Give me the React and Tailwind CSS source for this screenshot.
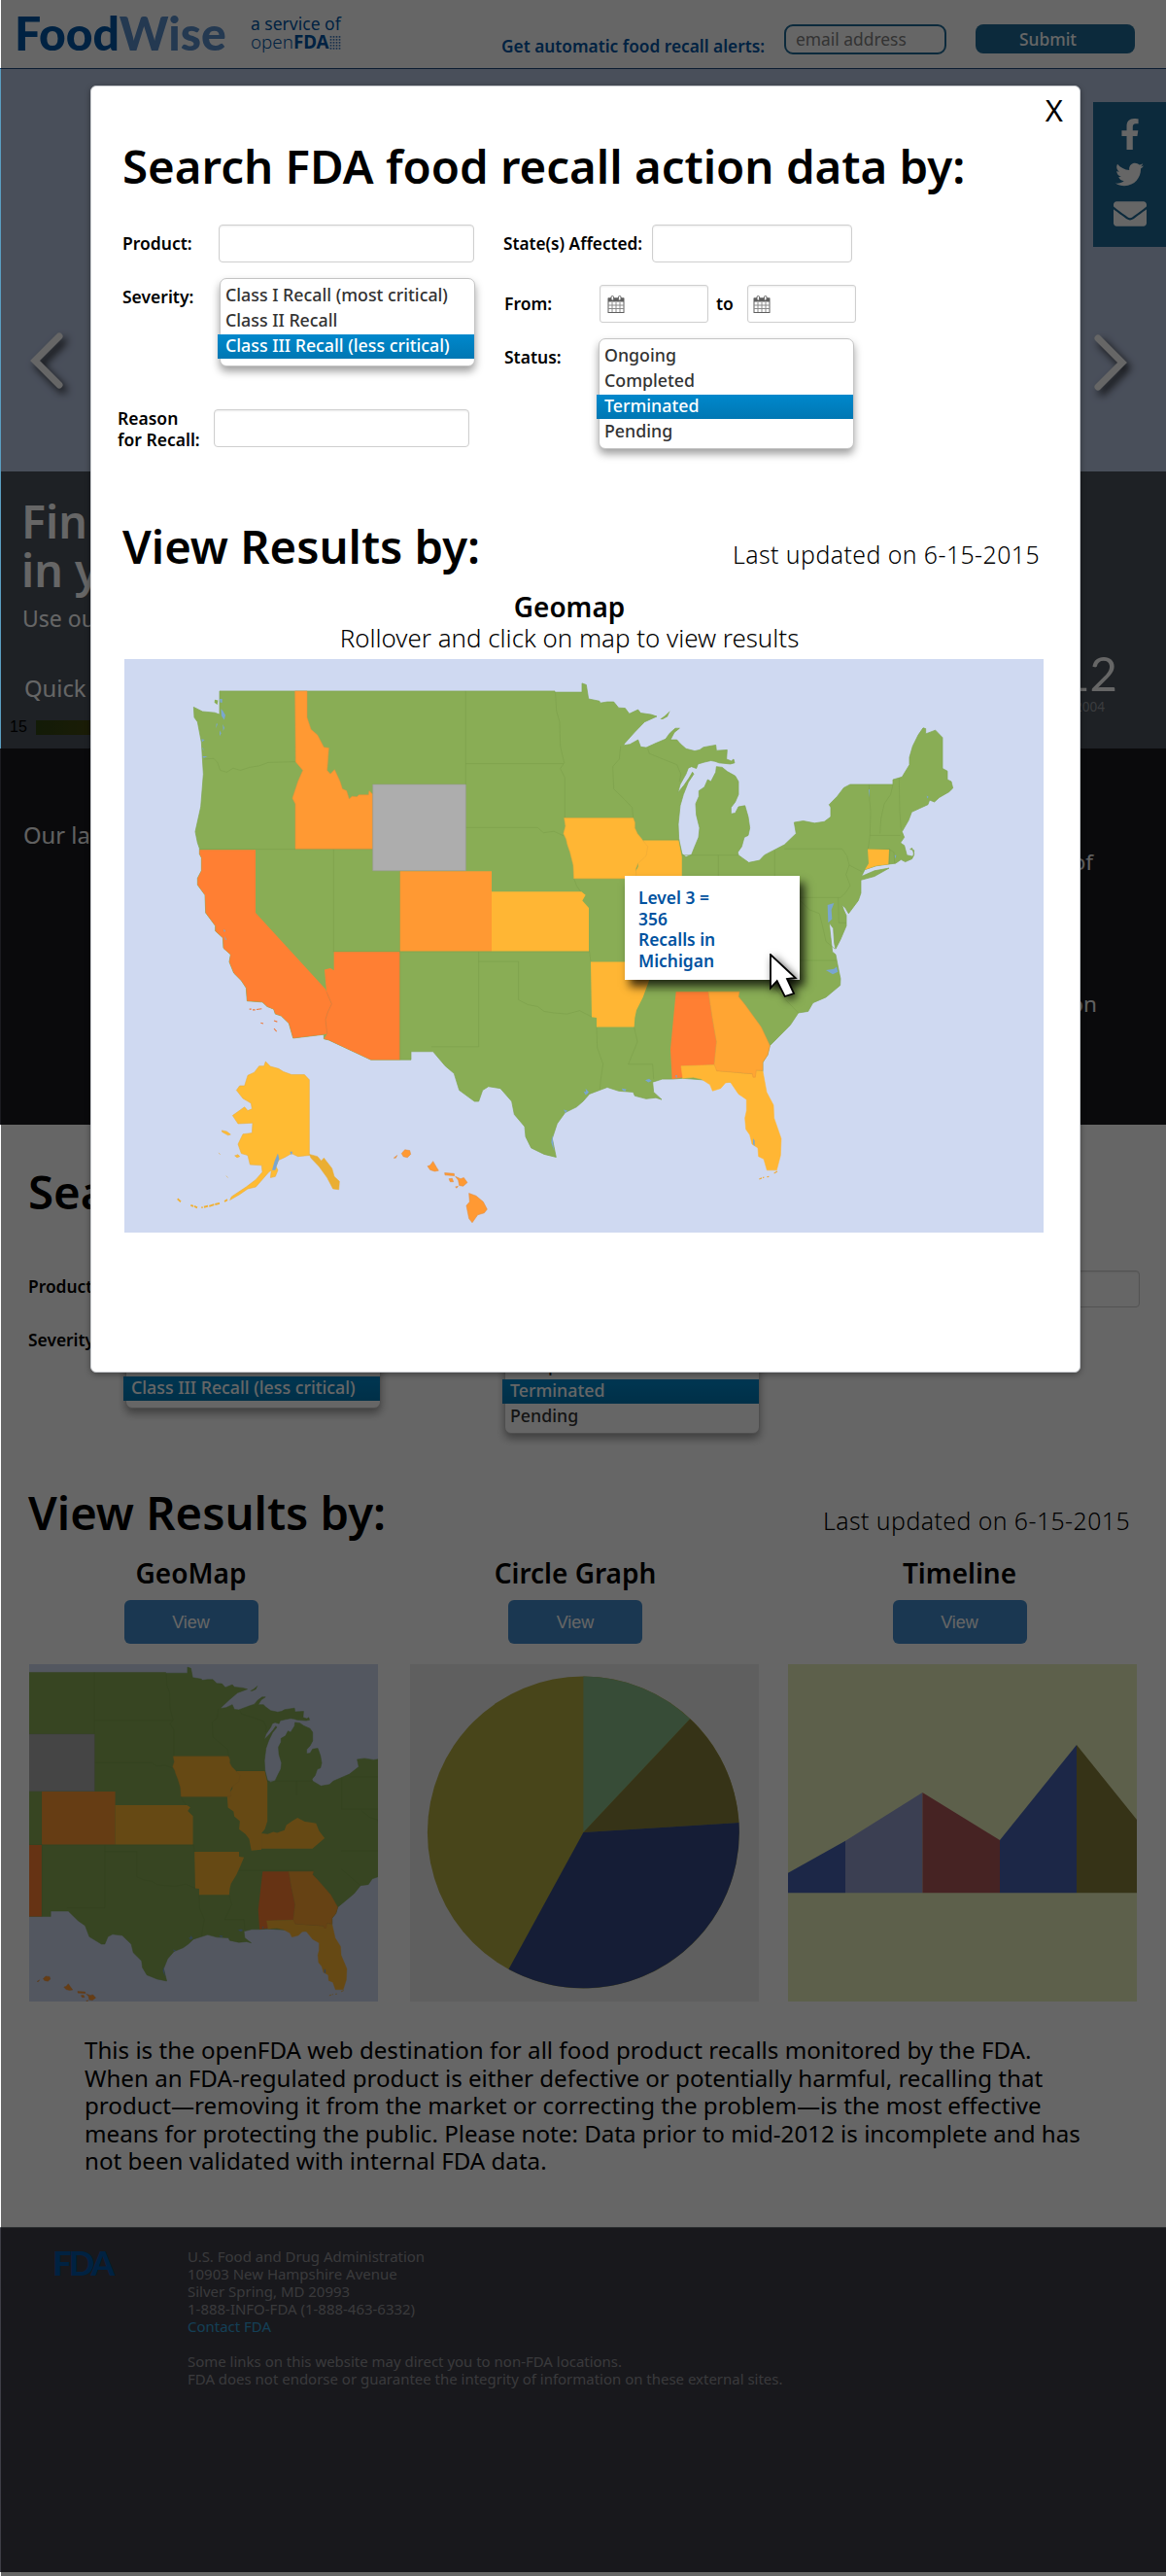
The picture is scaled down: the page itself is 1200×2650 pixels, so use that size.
import React from "react";
import { FaFacebookF, FaTwitter, FaEnvelope } from "react-icons/fa";

const WEST_COAST =
  "545,1040 532,1000 508,980 490,975 485,962 465,955 450,943 403,940 400,905 385,885 362,865 348,835 352,815 330,798 328,770 305,752 305,738 275,703 273,655 250,628 250,610 262,590 262,555 256,545 256,534";

const US_OUTLINE =
  "318,107 1353,107 1353,110 1437,110 1437,86 1450,90 1457,128 1491,134 1493,139 1515,136 1535,136 1550,152 1570,153 1583,168 1610,157 1618,166 1650,170 1668,175 1630,190 1600,217 1568,248 1565,253 1585,250 1610,238 1618,257 1635,259 1665,247 1695,236 1708,220 1725,207 1738,207 1722,218 1710,238 1730,238 1740,248 1758,262 1785,268 1800,265 1812,258 1850,252 1852,267 1885,265 1883,290 1898,295 1905,290 1908,300 1895,303 1860,300 1848,296 1835,294 1815,298 1795,303 1790,315 1775,310 1765,314 1758,330 1740,358 1733,380 1752,360 1768,340 1778,325 1782,330 1765,352 1750,385 1740,415 1734,465 1736,505 1746,545 1758,553 1775,547 1785,525 1797,500 1800,475 1790,440 1788,410 1798,390 1798,375 1815,365 1825,345 1835,350 1850,325 1852,310 1870,312 1885,323 1910,335 1920,350 1920,385 1910,405 1897,420 1897,437 1910,435 1920,418 1940,415 1950,445 1955,475 1950,495 1938,500 1930,525 1918,540 1920,548 1952,568 1985,562 2000,548 2062,520 2098,490 2092,460 2120,456 2155,462 2185,458 2205,445 2205,420 2200,412 2225,390 2245,367 2265,358 2397,358 2397,345 2425,338 2448,305 2448,285 2458,255 2475,225 2490,206 2498,208 2498,222 2528,212 2550,232 2550,315 2565,322 2565,345 2577,350 2582,368 2570,378 2540,393 2525,405 2510,400 2505,412 2480,422 2455,432 2445,455 2425,485 2432,500 2420,515 2432,522 2440,548 2460,552 2462,535 2450,532 2456,529 2462,545 2456,558 2435,566 2422,560 2405,570 2385,572 2345,577 2310,587 2300,605 2340,590 2385,583 2340,605 2298,615 2298,650 2290,670 2260,705 2250,690 2240,682 2245,695 2253,710 2253,738 2235,775 2220,800 2216,785 2213,745 2200,730 2205,770 2210,808 2220,815 2230,860 2235,880 2234,898 2190,930 2150,945 2135,968 2105,972 2080,1005 2040,1040 2017,1060 2010,1085 1995,1105 1995,1130 1900,1158 1748,1148 1715,1150 1685,1150 1655,1158 1658,1185 1683,1205 1665,1200 1635,1203 1600,1195 1595,1185 1550,1182 1515,1172 1460,1190 1440,1210 1420,1225 1385,1240 1360,1270 1345,1310 1357,1360 1320,1352 1280,1335 1263,1305 1260,1278 1228,1245 1220,1210 1185,1175 1148,1170 1130,1180 1118,1210 1105,1210 1058,1180 1042,1135 1015,1115 977,1076 909,1076 909,1098 785,1098 655,1045 640,1042 640,1030 " +
  WEST_COAST +
  " 256,530 250,515 243,485 260,418 268,330 262,245 250,190 240,178 238,150 265,162 303,165 318,170";

function UsMap({ viewBox, className }) {
  return (
    <svg viewBox={viewBox} preserveAspectRatio="none" className={className}>
      <rect width="946" height="590" fill="#cfd9f1" />
      <g transform="translate(-8,-8) scale(0.33333,0.38268)" strokeWidth="2" strokeLinejoin="round">
        <polygon points={US_OUTLINE} fill="#89ad55" stroke="#80a650" />
        <path
          fill="none"
          stroke="#7a9d49"
          strokeOpacity="0.75"
          d="M270,290 L300,288 312,300 320,320 340,325 360,314 382,320 410,312 440,308 468,299 553,297 M256,532 H791 M670,532 V808 M671,807 H1460 M875,591 V1098 M1078,107 V358 M1078,302 H1380 M1078,474 H1300 L1318,488 1350,484 1380,496 M1355,110 L1358,160 1368,190 1370,255 1382,300 1370,315 1384,340 V448 M1412,611 L1420,630 1440,655 M1118,807 V1063 H972 M1118,834 H1241 V937 L1270,950 1300,955 1320,968 1350,972 1390,975 1430,966 1467,983 M1460,806 L1464,835 M1482,1010 L1484,1065 1502,1110 1495,1150 1492,1178 M1556,255 L1552,290 1532,310 1535,370 1570,400 1592,420 1595,448 M1640,262 L1645,275 1730,305 1742,330 1738,350 M1622,507 H1738 M1598,1010 L1608,1050 1580,1110 H1655 L1658,1150 M1638,912 H1922 M1746,548 H1920 M1858,548 V605 M2032,535 V660 M2062,531 H2240 L2255,550 2262,575 2252,600 2265,630 2250,650 2235,662 H2030 M2262,575 L2300,592 M2323,358 L2325,400 2328,430 2326,495 2320,532 M2326,495 H2420 M2397,358 L2390,385 2370,410 2360,450 2357,490 M2416,340 L2418,430 2422,480 M2319,532 H2388 L2385,573 M2386,533 L2400,540 2402,570 M2228,662 L2230,730 H2253 M2110,670 L2140,695 2170,705 2180,740 2190,780 2218,800 M2030,831 H2222 M2030,905 L2105,972"
        />
        <g strokeWidth="1.5">
          <polygon points="551,107 588,107 588,178 600,210 620,225 640,258 655,260 650,320 660,330 673,318 690,350 697,370 710,375 718,397 727,390 742,391 748,386 778,386 780,375 791,385 791,531 552,531 552,410 543,395 560,350 575,320 553,297" fill="#ff9933" stroke="#e89038" />
          <polygon points="791,358 1078,358 1078,590 791,590" fill="#adadad" stroke="#989898" />
          <polygon points="875,591 1158,591 1158,806 875,806" fill="#ff9933" />
          <polygon points="1158,646 1435,646 1448,655 1438,670 1458,690 1458,806 1158,806" fill="#ffb634" />
          <polygon points={"429,534 429,703 645,908 655,930 664,948 652,970 645,990 650,1028 640,1030 " + WEST_COAST} fill="#ff7f33" />
          <polygon points="671,808 874,808 874,1098 785,1098 655,1045 640,1042 650,1028 645,990 652,970 664,948 648,915 642,856 660,852 671,858" fill="#ff7f33" />
          <path d="M648,915 L664,948 652,970 645,990 650,1028" fill="none" stroke="#d9763a" />
          <polygon points="1464,835 1636,835 1636,855 1655,858 1640,895 1625,930 1605,965 1600,985 1598,1010 1482,1010 1482,985 1467,983" fill="#ffb634" />
          <polygon points="1727,915 1827,915 1840,990 1852,1050 1845,1112 1743,1115 1752,1145 1715,1150 1710,1070" fill="#ff7f33" />
          <polygon points="1743,1115 1850,1112 1853,1128 1965,1137 1975,1127 1995,1128 2007,1185 2028,1220 2030,1255 2052,1310 2050,1355 2038,1395 2008,1395 1998,1365 1982,1358 1980,1335 1962,1325 1955,1300 1943,1285 1940,1255 1945,1235 1945,1205 1920,1190 1895,1158 1880,1160 1865,1175 1840,1182 1832,1165 1805,1150 1780,1145 1748,1148" fill="#ffb634" stroke="#ffb634" />
          <polygon points="1827,915 1923,915 1920,928 1940,950 1990,1010 2017,1060 2010,1085 1995,1105 1995,1127 1975,1126 1972,1145 1965,1145 1963,1136 1853,1128 1845,1110 1852,1050 1840,990" fill="#ffa533" stroke="#e8973a" />
          <polygon points="2319,532 2385,533 2383,573 2345,577 2310,587 2322,570" fill="#ffb634" />
          <path d="M1984,1419 l8,-3 M1995,1415 l4,-1 M2008,1413 l6,-1 M2030,1403 l10,-5" stroke="#f0aa35" strokeWidth="3" />
        </g>
        <g fill="#ffbb33" stroke="#e9ac38" strokeWidth="1.5">
          <polygon points="460,1103 475,1116 500,1122 515,1130 540,1138 580,1138 595,1152 595,1355 560,1358 540,1350 520,1360 500,1368 492,1385 498,1395 490,1412 475,1415 478,1395 470,1400 440,1430 430,1440 405,1445 380,1460 350,1475 355,1466 400,1440 430,1420 450,1400 448,1382 412,1380 405,1355 385,1350 375,1325 390,1298 418,1295 420,1268 375,1270 358,1248 395,1225 405,1235 418,1230 415,1215 390,1202 370,1180 380,1168 395,1168 405,1140 425,1132 440,1115 455,1115" />
          <polygon points="595,1352 620,1358 632,1370 640,1362 665,1390 672,1412 688,1425 686,1447 668,1445 650,1415 625,1385 600,1362" fill="#eaae33" />
          <path d="M325,1288 l15,3 12,8 -8,2 -18,-9z M365,1356 l10,-3 5,5 -8,3z M315,1348 l5,5 M338,1410 l6,5" />
        </g>
        <path d="M188,1472 l10,8 M229,1489 l8,3 M240,1492 l9,4 M262,1495 l4,0 M270,1494 l12,-3 M286,1492 l15,-5 M304,1487 l14,-3 M333,1479 l9,-5" stroke="#f0b033" strokeWidth="5" />
        <g fill="#ff9933" stroke="#e08c40" strokeWidth="1.5">
          <polygon points="880,1350 890,1340 905,1342 908,1352 898,1361 885,1358" />
          <polygon points="856,1362 866,1355 862,1362" />
          <polygon points="960,1384 968,1382 977,1371 987,1386 994,1396 982,1398 968,1394" />
          <polygon points="1013,1402 1042,1404 1043,1410 1014,1408" />
          <polygon points="1026,1418 1036,1417 1040,1426 1030,1426" />
          <polygon points="1046,1412 1062,1418 1072,1415 1083,1428 1070,1438 1058,1436 1055,1422" />
          <polygon points="1046,1440 1054,1438 1050,1443" />
          <polygon points="1088,1457 1110,1464 1132,1480 1144,1500 1135,1510 1115,1515 1098,1536 1088,1525 1080,1490 1090,1480" />
        </g>
        <path d="M410,962 l6,0 M420,964 l8,0 M432,963 l16,-2 M445,999 l8,2 M486,993 l10,3 M486,1014 l8,8" stroke="#ee7a3a" strokeWidth="3" />
        <g fill="#7aa6cf">
          <path d="M318,128 l8,0 0,10 -6,0z M322,155 l6,5 8,12 -4,12 -8,-10z M308,195 l4,0 -5,12z M328,196 l5,10 -4,8z M318,212 l5,8 -5,8z M262,236 l10,2 -8,6z M265,258 l5,8 -4,-2z M265,282 l16,0 -12,5z" />
          <path d="M303,130 l10,2 -2,12 -9,-6z" fill="#89ad55" />
          <path d="M498,1350 L502,1365 495,1382 490,1395 480,1395 488,1370z M535,1345 l8,0 -3,10z M1345,1300 l-3,20 8,22 -2,-20z M1448,1175 l10,10 -8,8z M1380,1232 l12,3 -6,6z M330,748 l6,2 -3,6z M334,765 l6,12 -5,-3z" />
          <path d="M1632,1153 l12,-4 8,6 -10,4z M1560,1175 l14,2 -4,6 -8,-3z M1442,1183 l10,2 -4,8z M2195,682 l20,-5 -8,18 2,25 -12,10z M2190,857 l25,-3 8,-6 4,14 -16,6z M2402,548 l5,0 -2,10z M2501,388 l6,3 -4,5z M1725,1140 l6,0 -2,8z M1965,1310 l5,5 0,15 -5,-5z M2322,372 l3,0 0,22z" />
        </g>
        <path d="M1678,182 l14,-8 17,-14 -8,16 -15,7z" fill="#89ad55" />
      </g>
      <g transform="translate(229.8,2.1) scale(.4784,.5035)">
        <polygon points="636,366 712,366 719,400 719,520 712,545 703,558 703,608 676,611 670,575 660,560 643,545 645,520 630,505 628,490 613,478 611,445 625,420 625,408 640,390" fill="#ffb634" />
        <polygon points="703,558 720,560 735,553 745,556 765,548 770,532 785,520 800,510 820,522 835,524 850,527 858,550 873,573 840,605 703,605" fill="#ffb634" />
      </g>
      <g transform="translate(-8,-8) scale(0.33333,0.38268)">
        <polygon points="1382,448 1595,448 1600,460 1600,475 1608,490 1622,505 1640,525 1635,550 1610,570 1603,585 1605,611 1412,611 1410,575 1400,540 1392,520 1388,505 1380,490 1386,470" fill="#ffb634" stroke="#eba938" strokeWidth="1.5" />
      </g>
    </svg>
  );
}

function PieChart() {
  return (
    <svg viewBox="0 0 359 347" className="h-[347px] w-[359px] bg-[#ededed]">
      <circle cx="178.4" cy="173" r="160.5" fill="#b4ac43" />
      <path d="M178.4,173 V12.5 A160.5,160.5 0 0 1 288.2,56.3 Z" fill="#8abe8a" />
      <path d="M178.4,173 L288.2,56.3 A160.5,160.5 0 0 1 338.5,163 Z" fill="#87803a" />
      <path d="M178.4,173 L338.5,163 A160.5,160.5 0 0 1 101.5,313.8 Z" fill="#364a88" />
    </svg>
  );
}

function Timeline() {
  return (
    <svg viewBox="0 0 359 347" className="h-[347px] w-[359px] bg-[#e9f0bc]">
      <polygon points="0,214.7 59,181.7 59,235.3 0,235.3" fill="#4662b2" />
      <polygon points="59,181.7 138.4,132 138.4,235.3 59,235.3" fill="#949ecd" />
      <polygon points="138.4,132 218,181 218,235.3 138.4,235.3" fill="#af5858" />
      <polygon points="218,181 297,83 297,235.3 218,235.3" fill="#4662b2" />
      <polygon points="297,83 359,160 359,235.3 297,235.3" fill="#87803a" />
    </svg>
  );
}

function Field({ className }) {
  return (
    <div className={"shrink-0 rounded border border-[#cfcfcf] bg-white shadow-[inset_0_1px_2px_rgba(0,0,0,0.08)] " + className} />
  );
}

function CalendarIcon({ className }) {
  return (
    <svg viewBox="0 0 18 18" className={"h-[18px] w-[18px] " + className}>
      <rect x="1" y="3" width="16" height="14.5" fill="#fff" stroke="#5f5f5f" />
      <rect x="1" y="2.5" width="16" height="4" fill="#5f5f5f" />
      <rect x="4" y="0.5" width="2.6" height="4.5" rx="1.2" fill="#fff" stroke="#5f5f5f" />
      <rect x="11.4" y="0.5" width="2.6" height="4.5" rx="1.2" fill="#fff" stroke="#5f5f5f" />
      <path d="M5 7V17 M9 7V17 M13 7V17 M1 10H17 M1 13.5H17" stroke="#8a8a8a" fill="none" />
    </svg>
  );
}

function DateField({ iconClass }) {
  return (
    <div className="flex h-[39px] w-[112px] items-center rounded-[3px] border border-[#cfcfcf] bg-white shadow-[inset_0_1px_2px_rgba(0,0,0,0.08)]">
      <CalendarIcon className={iconClass} />
    </div>
  );
}

function Dropdown({ before, selected, after = [], className }) {
  return (
    <ul className={"w-[263px] shrink-0 rounded-[7px] border border-[#c4c4c4] bg-white pt-[3px] text-[17.8px] font-medium text-[#333] shadow-[0_5px_9px_rgba(0,0,0,0.38)] " + className}>
      {before.map((t) => (
        <li key={t} className="h-[26px] pl-[5px] leading-[26px]">{t}</li>
      ))}
      <li className="-ml-[3px] mt-[2px] h-[25px] bg-linear-to-b from-[#0088cc] to-[#0077b3] pl-[8px] leading-[23px] text-white">{selected}</li>
      {after.map((t) => (
        <li key={t} className="h-[25px] pl-[5px] leading-[25px]">{t}</li>
      ))}
    </ul>
  );
}

const SEVERITY = ["Class I Recall (most critical)", "Class II Recall"];

function SearchModal() {
  return (
    <div className="absolute left-[93px] top-[88px] flex h-[1324px] w-[1019px] flex-col rounded-md border border-[#c9ccd0] bg-white text-black shadow-[0_2px_6px_rgba(0,0,0,0.35)]">
      <div className="flex justify-end pr-[17px] pt-[4px]">
        <button className="text-[31px] font-normal leading-[40px]">X</button>
      </div>
      <h2 className="mt-[10px] whitespace-nowrap pl-[32px] text-[47.4px] font-semibold leading-[56px]">Search FDA food recall action data by:</h2>

      <div className="ml-[32px] flex h-[263px] pt-[32px] text-[17.5px] font-semibold">
        <div className="w-[393px]">
          <div className="flex items-center">
            <span className="w-[99px]">Product:</span>
            <Field className="h-[39px] w-[263px]" />
          </div>
          <div className="mt-[16px] flex">
            <span className="mt-[7px] w-[100px] leading-[24px]">Severity:</span>
            <Dropdown before={SEVERITY} selected="Class III Recall (less critical)" className="h-[91px]" />
          </div>
          <div className="-ml-[5px] mt-[41px] flex">
            <span className="mt-px w-[99px] leading-[22px]">Reason<br />for Recall:</span>
            <Field className="mt-[3px] h-[39px] w-[263px]" />
          </div>
        </div>
        <div className="w-[420px]">
          <div className="flex items-center">
            <span className="-ml-px w-[153px] whitespace-nowrap text-[17.2px]">State(s) Affected:</span>
            <Field className="h-[39px] w-[206px]" />
          </div>
          <div className="mt-[23px] flex items-center">
            <span className="w-[98px]">From:</span>
            <DateField iconClass="ml-[7px]" />
            <span className="ml-[8px] w-[32px]">to</span>
            <DateField iconClass="ml-[5px]" />
          </div>
          <div className="mt-[16px] flex">
            <span className="mt-[7px] w-[97px] leading-[24px]">Status:</span>
            <Dropdown before={["Ongoing", "Completed"]} selected="Terminated" after={["Pending"]} className="h-[114px]" />
          </div>
        </div>
      </div>

      <div className="mt-[72px] flex items-baseline justify-between pl-[32px] pr-[41px]">
        <h2 className="text-[47.2px] font-semibold leading-[56px]">View Results by:</h2>
        <span className="text-[24.8px] font-light leading-[30px] tracking-[0.45px]">Last updated on 6-15-2015</span>
      </div>
      <div className="mt-[18px] pr-[33px] text-center leading-[32px]">
        <h3 className="text-[27.9px] font-semibold">Geomap</h3>
        <p className="text-[25.9px] font-light">Rollover and click on map to view results</p>
      </div>
      <div className="relative ml-[34px] mt-[6px] h-[590px] w-[946px]">
        <UsMap viewBox="0 0 946 590" className="h-[590px] w-[946px]" />
        <div className="absolute left-[515px] top-[223px] h-[107px] w-[180px] bg-white pl-[14px] pt-[12px] text-[17.4px] font-semibold leading-[21.7px] text-[#00529f] shadow-[5px_7px_9px_rgba(0,0,0,0.75)]">
          Level 3 =<br />356<br />Recalls in<br />Michigan
        </div>
        <svg viewBox="-1 -1 30 48" className="absolute left-[664px] top-[303px] h-[48px] w-[30px] drop-shadow-[3px_3px_4px_rgba(0,0,0,0.7)]">
          <polygon points="0,0 0,34.4 6.7,27 14.7,43 24,40 17,25 25.7,24" fill="#fff" stroke="#000" strokeWidth="1.8" />
        </svg>
      </div>
    </div>
  );
}

function ResultCard({ title, headClass, children }) {
  return (
    <div className="w-[359px]">
      <div className={"flex flex-col items-center " + headClass}>
        <h3 className="whitespace-nowrap text-[28px] font-semibold leading-[32px]">{title}</h3>
        <button className="mt-[12px] h-[45px] w-[138px] rounded-md bg-[#428bca] pt-[2px] font-['Liberation_Sans',sans-serif] text-[18px] text-white">View</button>
      </div>
      <div className="mt-[21px]">{children}</div>
    </div>
  );
}

function Chevron({ flip, className }) {
  return (
    <svg viewBox="0 0 34 58" className={"h-[58px] w-[34px] drop-shadow-[4px_5px_4px_rgba(0,0,0,0.8)] " + className}>
      <path d={flip ? "M4,4 L29,29 L4,54" : "M30,4 L5,29 L30,54"} fill="none" stroke="#fff" strokeWidth="7" strokeLinecap="round" />
    </svg>
  );
}

export default function App() {
  return (
    <div className="relative h-[2650px] w-[1200px] overflow-hidden bg-white font-['Noto_Sans','Open_Sans',sans-serif] text-black">
      <header className="flex h-[71px] items-start border-b border-[#1e4a7a]">
        <div className="w-[258px] pl-[15px] pt-[10px] font-['Lato',sans-serif] text-[48.1px] font-black leading-[48px] text-[#0055a5]">
          Food<span className="text-[#5a8ecb]">Wise</span>
        </div>
        <div className="w-[258px] pt-[15px] text-[17.5px] leading-[19.4px] text-[#0055a5]">
          <div>a service of</div>
          <div className="flex items-center">
            <span className="text-[18.8px] font-light">open<b className="font-bold">FDA</b></span>
            <svg viewBox="0 0 12 14" className="h-[14px] w-[12px]">
              <path d="M1.5 0V14 M4.5 0V14 M7.5 0V14 M10.5 0V14" stroke="#3f7cc0" strokeWidth="1.6" strokeDasharray="1.8 1.2" />
            </svg>
          </div>
        </div>
        <span className="mt-[36px] w-[291px] whitespace-nowrap text-[17.3px] font-semibold leading-[24px] text-[#0055a5]">Get automatic food recall alerts:</span>
        <div className="mt-[25px] h-[31px] w-[167px] rounded-[9px] border-2 border-[#1e6996] pl-[10px] text-[17.4px] leading-[26px] text-[#808080]">email address</div>
        <button className="ml-[30px] mt-[25px] h-[30px] w-[164px] rounded-lg bg-[#1e6996] pr-[15px] text-[17.4px] font-medium leading-[30px] text-white">Submit</button>
      </header>

      <section className="relative flex h-[414px] justify-between border-l border-[#5a9ec0] bg-[#b7c5e2] pl-[30px] pr-[40px]">
        <Chevron className="mt-[271px]" />
        <Chevron flip className="mt-[273px]" />
        <div className="absolute right-0 top-[34px] flex h-[149px] w-[75px] flex-col items-center bg-[#1e6996] text-white">
          <FaFacebookF className="mt-[17px] h-[32px] w-[20px]" />
          <FaTwitter className="mt-[11px] h-[29px] w-[29px]" />
          <FaEnvelope className="mt-[9px] h-[34px] w-[34px]" />
        </div>
      </section>

      <section className="flex h-[285px] justify-between border-l border-[#5a9ec0] bg-[#4b535d] text-[22.5px] leading-[30px] text-white">
        <div className="pt-[26px]">
          <div className="pl-[21px] text-[46.5px] font-semibold leading-[50px]">Fin<br />in y</div>
          <div className="mt-[10px] pl-[22px] text-[23px] font-normal">Use ou</div>
          <div className="mt-[42px] pl-[24px] text-[23.8px] font-normal">Quick</div>
          <div className="mt-[15px] flex items-center pl-[9px]">
            <span className="w-[27px] font-['Liberation_Sans',sans-serif] text-[16px] leading-[20px] text-black">15</span>
            <div className="h-[15px] w-[90px] bg-linear-to-r from-[#2f4412] to-[#4f4a10]" />
          </div>
        </div>
        <div className="flex flex-col items-end pt-[182px]">
          <span className="pr-[50px] font-['Lato',sans-serif] text-[49px] leading-[50px]">12</span>
          <span className="mt-[2px] pr-[63px] text-[13.5px] leading-[16px] text-[#93969c]">2004</span>
        </div>
      </section>

      <section className="flex h-[387px] justify-between bg-[#1b1b20] text-[22.5px] leading-[30px] text-[#f2f2f2]">
        <div className="pl-[24px] pt-[74px] text-[23.8px]">Our la</div>
        <div className="flex flex-col pt-[102px]">
          <span className="pr-[75px] text-right">of</span>
          <span className="mt-[116px] pr-[71px] text-right">on</span>
        </div>
      </section>

      <section className="h-[1134px] pt-[41px]">
        <h2 className="pl-[29px] text-[47.4px] font-semibold leading-[56px]">Sea</h2>
        <div className="flex h-[274px] pl-[29px] text-[17.4px] font-semibold">
          <div className="w-[393px] pt-[53px]">
            <div className="flex">
              <span className="mt-[4px] w-[100px] leading-[24px]">Product:</span>
              <Field className="h-[39px] w-[263px]" />
            </div>
            <div className="mt-[12px] flex">
              <span className="mt-[8px] w-[100px] leading-[24px]">Severity:</span>
              <Dropdown before={SEVERITY} selected="Class III Recall (less critical)" className="h-[91px]" />
            </div>
          </div>
          <div className="w-[488px] pl-[97px] pt-[107px]">
            <Dropdown before={["Ongoing", "Completed"]} selected="Terminated" after={["Pending"]} className="h-[114px]" />
          </div>
          <Field className="mt-[53px] h-[38px] w-[263px]" />
        </div>
        <div className="flex items-baseline justify-between pl-[29px] pr-[37px]">
          <h2 className="text-[47.2px] font-semibold leading-[56px]">View Results by:</h2>
          <span className="text-[24.8px] font-light leading-[30px] tracking-[0.45px]">Last updated on 6-15-2015</span>
        </div>
        <div className="mt-[18px] flex pl-[30px]">
          <ResultCard title="GeoMap" headClass="w-[333px]">
            <UsMap viewBox="267.3 20.2 448.75 524" className="h-[347px] w-[359px]" />
          </ResultCard>
          <div className="ml-[33px]">
            <ResultCard title="Circle Graph" headClass="w-[340px]">
              <PieChart />
            </ResultCard>
          </div>
          <div className="ml-[30px]">
            <ResultCard title="Timeline" headClass="w-[353px]">
              <Timeline />
            </ResultCard>
          </div>
        </div>
        <p className="mt-[36px] whitespace-nowrap pl-[87px] text-[24.13px] font-normal leading-[28.55px]">
          This is the openFDA web destination for all food product recalls monitored by the FDA.<br />
          When an FDA-regulated product is either defective or potentially harmful, recalling that<br />
          product—removing it from the market or correcting the problem—is the most effective<br />
          means for protecting the public. Please note: Data prior to mid-2012 is incomplete and has<br />
          not been validated with internal FDA data.
        </p>
      </section>

      <footer className="flex h-[355px] border-t border-[#6a7076] bg-[#3e3e46] pt-[20px] text-[14.98px] leading-[18px] text-[#919196]">
        <div className="w-[193px] pl-[54px] font-['Lato',sans-serif] text-[35px] font-black leading-[30px] tracking-[-3px] text-[#0055a5]">FDA</div>
        <div>
          U.S. Food and Drug Administration<br />
          10903 New Hampshire Avenue<br />
          Silver Spring, MD 20993<br />
          1-888-INFO-FDA (1-888-463-6332)<br />
          <span className="text-[#329fd6]">Contact FDA</span><br />
          <br />
          Some links on this website may direct you to non-FDA locations.<br />
          FDA does not endorse or guarantee the integrity of information on these external sites.
        </div>
      </footer>

      <div className="absolute inset-y-0 left-[1px] right-0 bg-black/60" />
      <SearchModal />
    </div>
  );
}
